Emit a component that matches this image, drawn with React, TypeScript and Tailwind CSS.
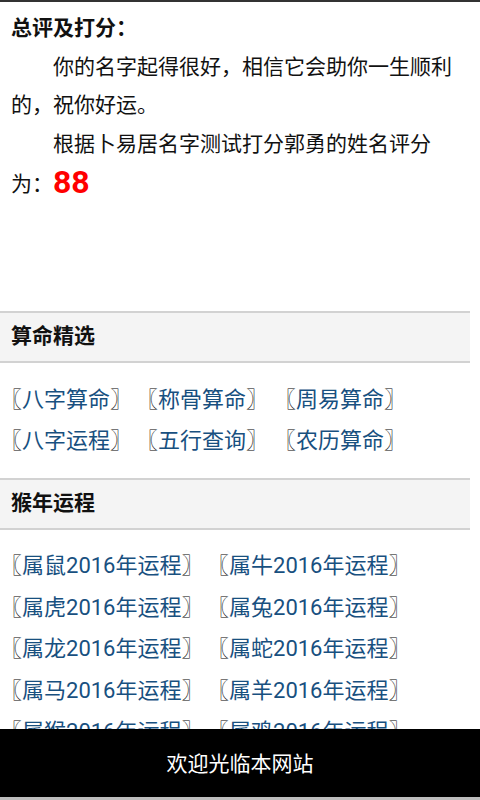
import React from "react";

const picks = ["八字算命", "称骨算命", "周易算命", "八字运程", "五行查询", "农历算命"];
const zodiac = ["鼠", "牛", "虎", "兔", "龙", "蛇", "马", "羊", "猴", "鸡", "狗", "猪"];

function Item({ text }: { text: string }) {
  return (
    <span className="whitespace-nowrap text-[22px]">
      <span className="text-black [font-feature-settings:'halt']">〖</span>
      <a className="text-[#18507f] no-underline">{text}</a>
      <span className="text-black [font-feature-settings:'halt']">〗</span>
    </span>
  );
}

function Bar({ title }: { title: string }) {
  return (
    <div className="w-[470px] h-[52px] border-t-2 border-b-2 border-[#d2d2d2] bg-[#f4f4f4] px-[11px] flex items-center">
      <span className="font-bold text-[21px] text-[#111]">{title}</span>
    </div>
  );
}

export default function App() {
  return (
    <div
      className="min-h-screen bg-white border-t-2 border-[#333] text-[#111] text-[21px] pb-[90px]"
      style={{ fontFamily: 'Roboto, "Noto Sans CJK SC", sans-serif' }}
    >
      <div className="w-[470px] px-[11px] pt-[6px]">
        <p className="font-bold leading-[40px]">总评及打分：</p>
        <p className="indent-[42px] leading-[38px]">你的名字起得很好，相信它会助你一生顺利的，祝你好运。</p>
        <p className="indent-[42px] leading-[40px]">
          根据卜易居名字测试打分郭勇的姓名评分为：
          <span className="relative top-[2px] text-[32px] font-bold text-[#ff0000] leading-none">88</span>
        </p>
      </div>

      <div className="mt-[107px]">
        <Bar title="算命精选" />
        <div className="w-[470px] px-[11px] pt-[16px] pb-[17px] grid grid-cols-[136px_138px_auto] leading-[41px]">
          {picks.map((p) => (
            <Item key={p} text={p} />
          ))}
        </div>
        <Bar title="猴年运程" />
        <div className="w-[470px] px-[11px] pt-[15px] pb-[16px] grid grid-cols-[207px_auto] leading-[41.5px]">
          {zodiac.map((z) => (
            <Item key={z} text={`属${z}2016年运程`} />
          ))}
        </div>
      </div>

      <div className="fixed bottom-0 left-0 right-0 h-[71px] pt-[4px] bg-black border-b-[3px] border-[#bdbdbd] flex items-center justify-center">
        <span className="text-white text-[21px]">欢迎光临本网站</span>
      </div>
    </div>
  );
}
